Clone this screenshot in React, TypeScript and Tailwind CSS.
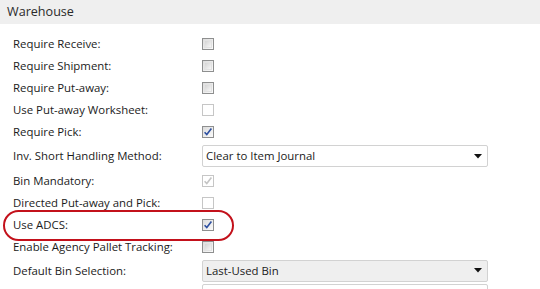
import React from "react";

type Box = "on" | "off" | "dis-off" | "dis-on";

function Check({ kind }: { kind: Box }) {
  const disabled = kind === "dis-off" || kind === "dis-on";
  const checked = kind === "on" || kind === "dis-on";
  return (
    <span
      className={
        disabled
          ? "relative flex h-[12px] w-[12px] items-center justify-center border border-[#c6c6c6] bg-white"
          : "relative flex h-[12px] w-[12px] items-center justify-center border border-[#8e8f8f] bg-gradient-to-br from-[#dcdcdc] to-[#fbfbfb]"
      }
    >
      {!disabled && !checked && (
        <span className="h-[8px] w-[8px] border border-[#e2e2e2] bg-gradient-to-br from-[#d4d4d4] to-[#f6f6f6]" />
      )}
      {checked && (
        <svg width="10" height="10" viewBox="0 0 10 10" className="absolute">
          <path
            d="M1.6 5.2 L3.8 7.6 L8.4 1.6"
            fill="none"
            stroke={disabled ? "#c4c4c4" : "#2d4fa0"}
            strokeWidth="1.6"
          />
        </svg>
      )}
    </span>
  );
}

function Select({ value, gray }: { value: string; gray?: boolean }) {
  return (
    <div
      className={
        "flex h-[22px] w-[286px] items-center justify-between rounded-[2px] border border-[#d2d2d2] pl-[3px] pr-[5px] " +
        (gray ? "bg-[#efefef]" : "bg-white")
      }
    >
      <span>{value}</span>
      <svg width="8" height="5" viewBox="0 0 8 5">
        <path d="M0 0 H8 L4 4.5 Z" fill="#111" />
      </svg>
    </div>
  );
}

function Row({ label, children, h = "h-[22px]" }: { label: string; children: React.ReactNode; h?: string }) {
  return (
    <div className={"flex items-center " + h}>
      <div className="w-[202px] shrink-0 pl-[13px]">{label}</div>
      {children}
    </div>
  );
}

export default function App() {
  return (
    <div
      className="relative h-[289px] w-[540px] overflow-hidden bg-white text-[11.4px] text-[#1b1b1b]"
      style={{ fontFamily: '"Open Sans", "Liberation Sans", sans-serif' }}
    >
      <div className="flex h-[24px] items-center bg-[#efefef] pl-[7px] text-[12.6px] text-[#2a2a2a]">
        Warehouse
      </div>
      <div className="flex flex-col pt-[9px]">
        <Row label="Require Receive:"><Check kind="off" /></Row>
        <Row label="Require Shipment:"><Check kind="off" /></Row>
        <Row label="Require Put-away:"><Check kind="off" /></Row>
        <Row label="Use Put-away Worksheet:"><Check kind="dis-off" /></Row>
        <Row label="Require Pick:"><Check kind="on" /></Row>
        <Row label="Inv. Short Handling Method:" h="h-[27px] pb-[1px]">
          <Select value="Clear to Item Journal" />
        </Row>
        <Row label="Bin Mandatory:"><Check kind="dis-on" /></Row>
        <Row label="Directed Put-away and Pick:"><Check kind="dis-off" /></Row>
        <Row label="Use ADCS:"><Check kind="on" /></Row>
        <Row label="Enable Agency Pallet Tracking:"><Check kind="off" /></Row>
        <Row label="Default Bin Selection:" h="h-[25px]">
          <Select value="Last-Used Bin" gray />
        </Row>
        <div className="ml-[202px] mt-[1px] h-[22px] w-[286px] rounded-[2px] border border-[#d2d2d2] bg-white" />
      </div>
      <div className="absolute left-[3px] top-[210px] h-[31px] w-[231px] rounded-full border-2 border-[#c3111b]" />
    </div>
  );
}
